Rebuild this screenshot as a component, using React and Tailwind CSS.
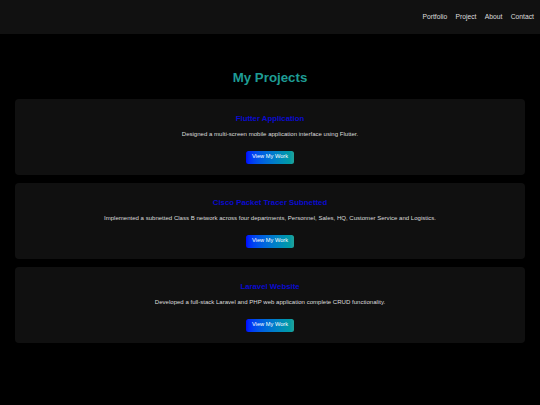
const navLinks = ['Portfolio', 'Project', 'About', 'Contact'];

const projects = [
  {
    title: 'Flutter Application',
    desc: 'Designed a multi-screen mobile application interface using Flutter.',
  },
  {
    title: 'Cisco Packet Tracer Subnetted',
    desc: 'Implemented a subnetted Class B network across four departments, Personnel, Sales, HQ, Customer Service and Logistics.',
  },
  {
    title: 'Laravel Website',
    desc: 'Developed a full-stack Laravel and PHP web application complete CRUD functionality.',
  },
];

const App = () => {
  return (
    <div className="min-h-[405px] bg-black font-['Liberation_Sans',Arial,sans-serif]">
      {/* Top bar */}
      <header className="h-[34px] bg-[#111111] flex items-center justify-end pr-[6px]">
        <nav className="flex items-center gap-[8.3px] text-[6.75px] leading-none text-[#dddddd]">
          {navLinks.map((link) => (
            <a key={link} href="#">{link}</a>
          ))}
        </nav>
      </header>

      <main className="px-[15px]">
        <h1 className="mt-[36px] mb-[13px] text-center text-[13.3px] leading-[16px] font-bold text-[#1e9c94]">
          My Projects
        </h1>

        {/* Project cards */}
        <div className="flex flex-col gap-[8.5px]">
          {projects.map(({ title, desc }) => (
            <div key={title} className="rounded-[4px] bg-[#101010] pt-[15px] pb-[11px] flex flex-col items-center text-center">
              <h3 className="text-[7.8px] leading-[10px] font-bold text-[#0b0bcf]">{title}</h3>
              <p className="mt-[6px] text-[6.05px] leading-[8px] text-[#dcdcdc]">{desc}</p>
              <button className="mt-[13px] h-[12.5px] px-[5.6px] rounded-[2.5px] bg-gradient-to-r from-[#0000ff] to-[#20a29a] text-[5.7px] leading-none text-white">
                View My Work
              </button>
            </div>
          ))}
        </div>
      </main>
    </div>
  );
};

export default App;
